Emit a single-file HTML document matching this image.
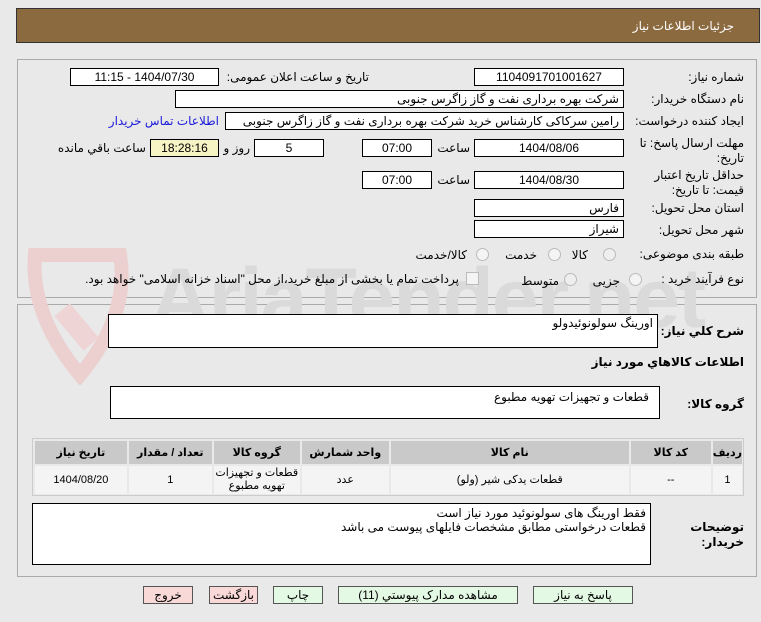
<!DOCTYPE html>
<html><head><meta charset="utf-8"><style>
body{margin:0;width:761px;height:622px;background:#e9e9e9;font-family:"Liberation Sans","DejaVu Sans",sans-serif;font-size:12px;color:#000;position:relative;overflow:hidden}
.a{position:absolute}
.b{position:absolute;background:#fff;border:1px solid #000;box-sizing:border-box;direction:rtl;padding:0 4px;line-height:16px;font-size:12px;white-space:nowrap;overflow:hidden}
.c{text-align:center;padding:0}
.l{position:absolute;direction:rtl;white-space:nowrap;font-size:12px}
.btn{position:absolute;border:1px solid #555;box-sizing:border-box;text-align:center;line-height:17px;font-size:12px;background:#e4f9e4}
.pk{background:#f9d8d8}
table{border-collapse:separate;border-spacing:2px}
td{padding:0}
</style></head><body>
<div class="a" style="left:16px;top:8px;width:744px;height:35px;background:#8c6a3f;border:1px solid #333;box-sizing:border-box"></div>
<div class="l" style="right:27px;top:19px;color:#fff;font-size:12px">جزئیات اطلاعات نیاز</div>
<div class="a" style="left:17px;top:59px;width:740px;height:239px;border:1px solid #aaa;box-sizing:border-box"></div>
<div class="a" style="left:17px;top:304px;width:740px;height:273px;border:1px solid #aaa;box-sizing:border-box"></div>
<!-- watermark -->
<svg class="a" style="left:20px;top:245px" width="130" height="140"><path d="M15 10 L100 10 Q110 70 60 130 Q10 70 15 10Z" fill="none" stroke="#ecd0d0" stroke-width="14"/><rect x="45" y="60" width="20" height="45" fill="#eed4d4" transform="rotate(-40 55 80)"/></svg>
<div class="a" style="left:150px;top:250px;font-size:84px;color:#dadada;font-weight:bold;letter-spacing:-2px">AriaTender.net</div>

<div class="l" style="right:17px;top:70px">شماره نیاز:</div>
<div class="b c" style="left:474px;top:68px;width:150px;height:18px">1104091701001627</div>
<div class="l" style="right:392px;top:70px">تاریخ و ساعت اعلان عمومی:</div>
<div class="b c" style="left:70px;top:68px;width:149px;height:18px">1404/07/30 - 11:15</div>

<div class="l" style="right:17px;top:92px">نام دستگاه خریدار:</div>
<div class="b" style="left:175px;top:90px;width:449px;height:18px">شرکت بهره برداری نفت و گاز زاگرس جنوبی</div>

<div class="l" style="right:17px;top:114px">ایجاد کننده درخواست:</div>
<div class="b" style="left:225px;top:112px;width:399px;height:18px">رامین سرکاکی کارشناس خرید شرکت بهره برداری نفت و گاز زاگرس جنوبی</div>
<div class="l" style="right:542px;top:114px;color:#1a1adb">اطلاعات تماس خریدار</div>

<div class="l" style="right:17px;top:136px;line-height:15px">مهلت ارسال پاسخ: تا<br>تاریخ:</div>
<div class="b c" style="left:474px;top:139px;width:150px;height:18px">1404/08/06</div>
<div class="l" style="right:291px;top:141px">ساعت</div>
<div class="b c" style="left:362px;top:139px;width:70px;height:18px">07:00</div>
<div class="b c" style="left:254px;top:139px;width:70px;height:18px">5</div>
<div class="l" style="right:511px;top:141px">روز و</div>
<div class="b c" style="left:150px;top:139px;width:69px;height:18px;background:#f6f3c4">18:28:16</div>
<div class="l" style="right:615px;top:141px">ساعت باقي مانده</div>

<div class="l" style="right:17px;top:168px;line-height:15px">حداقل تاریخ اعتبار<br>قیمت: تا تاریخ:</div>
<div class="b c" style="left:474px;top:171px;width:150px;height:18px">1404/08/30</div>
<div class="l" style="right:291px;top:173px">ساعت</div>
<div class="b c" style="left:362px;top:171px;width:70px;height:18px">07:00</div>

<div class="l" style="right:17px;top:201px">استان محل تحویل:</div>
<div class="b" style="left:474px;top:199px;width:150px;height:18px">فارس</div>
<div class="l" style="right:17px;top:223px">شهر محل تحویل:</div>
<div class="b" style="left:474px;top:220px;width:150px;height:18px">شیراز</div>

<div class="l" style="right:17px;top:247px">طبقه بندی موضوعی:</div>
<div class="a" style="left:603px;top:248px;width:11px;height:11px;border:1px solid #bbb;border-radius:50%;background:#eee"></div>
<div class="l" style="right:173px;top:248px">کالا</div>
<div class="a" style="left:548px;top:248px;width:11px;height:11px;border:1px solid #bbb;border-radius:50%;background:#f4f4f4"></div>
<div class="l" style="right:224px;top:248px">خدمت</div>
<div class="a" style="left:476px;top:248px;width:11px;height:11px;border:1px solid #bbb;border-radius:50%;background:#f4f4f4"></div>
<div class="l" style="right:294px;top:248px">کالا/خدمت</div>

<div class="l" style="right:17px;top:272px">نوع فرآیند خرید :</div>
<div class="a" style="left:629px;top:273px;width:11px;height:11px;border:1px solid #bbb;border-radius:50%;background:#f4f4f4"></div>
<div class="l" style="right:141px;top:274px">جزیی</div>
<div class="a" style="left:564px;top:273px;width:11px;height:11px;border:1px solid #bbb;border-radius:50%;background:#eee"></div>
<div class="l" style="right:202px;top:274px">متوسط</div>
<div class="a" style="left:466px;top:272px;width:11px;height:11px;border:1px solid #bbb;background:#f4f4f4"></div>
<div class="l" style="right:302px;top:272px">پرداخت تمام یا بخشی از مبلغ خرید،از محل "اسناد خزانه اسلامی" خواهد بود.</div>

<div class="l" style="right:17px;top:324px;font-weight:bold">شرح کلي نياز:</div>
<div class="b" style="left:108px;top:314px;width:550px;height:34px">اورینگ سولونوئیدولو</div>
<div class="l" style="right:17px;top:355px;font-weight:bold">اطلاعات کالاهاي مورد نياز</div>
<div class="l" style="right:17px;top:397px;font-weight:bold">گروه کالا:</div>
<div class="b" style="left:110px;top:386px;width:550px;height:33px;padding-right:10px;padding-top:2px">قطعات و تجهیزات تهویه مطبوع</div>

<div class="a" style="left:32px;top:438px;width:712px;height:58px;border:1px solid #ccc;box-sizing:border-box"></div>
<div class="a" style="left:33px;top:439px;direction:rtl">
<table style="width:711px;font-size:11px;text-align:center">
<tr style="background:#c9c9c9;height:23px;font-weight:bold"><td style="width:26px">رديف</td><td style="width:80px">کد کالا</td><td style="width:238px">نام کالا</td><td style="width:87px">واحد شمارش</td><td style="width:86px">گروه کالا</td><td style="width:83px">تعداد / مقدار</td><td>تاریخ نیاز</td></tr>
<tr style="background:#f4f4f4;height:28px;line-height:13px"><td>1</td><td>--</td><td>قطعات یدکی شیر (ولو)</td><td>عدد</td><td>قطعات و تجهیزات<br>تهویه مطبوع</td><td>1</td><td>1404/08/20</td></tr>
</table></div>

<div class="l" style="right:17px;top:520px;font-weight:bold;line-height:15px;text-align:right">توضیحات<br>خریدار:</div>
<div class="b" style="left:32px;top:503px;width:619px;height:62px;line-height:14px;padding-top:2px">فقط اورینگ های سولونوئید مورد نیاز است<br>قطعات درخواستی مطابق مشخصات فایلهای پیوست می باشد</div>

<div class="btn" style="left:533px;top:586px;width:100px;height:18px">پاسخ به نیاز</div>
<div class="btn" style="left:338px;top:586px;width:180px;height:18px">مشاهده مدارک پیوستي (11)</div>
<div class="btn" style="left:273px;top:586px;width:50px;height:18px">چاپ</div>
<div class="btn pk" style="left:209px;top:586px;width:49px;height:18px">بازگشت</div>
<div class="btn pk" style="left:143px;top:586px;width:50px;height:18px">خروج</div>
</body></html>
